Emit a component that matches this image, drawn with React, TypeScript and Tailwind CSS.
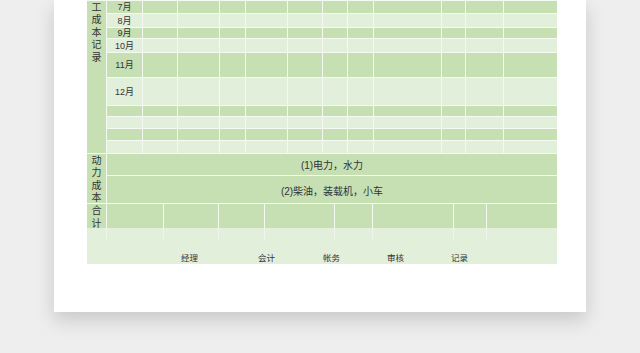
const DARK = "bg-[#c6e0b4]";
const LIGHT = "bg-[#e2efda]";

// month rows of the labour cost block, top to bottom
const monthRows = [
  { label: "7月", dark: true },
  { label: "8月", dark: false },
  { label: "9月", dark: true },
  { label: "10月", dark: false },
  { label: "11月", dark: true },
  { label: "12月", dark: false },
  { label: "", dark: true },
  { label: "", dark: false },
  { label: "", dark: true },
  { label: "", dark: false },
];

const blankCols = 11;
const totalCols = 8;
const signers = [
  { name: "经理", cls: "ml-[94px]" },
  { name: "会计", cls: "ml-[60px]" },
  { name: "帐务", cls: "ml-[48px]" },
  { name: "审核", cls: "ml-[47px]" },
  { name: "记录", cls: "ml-[47px]" },
];

function VerticalLabel({ chars, className = "" }: { chars: string; className?: string }) {
  return (
    <div className={`flex flex-col items-center text-[10px] leading-[12.5px] text-[#333] ${className}`}>
      {chars.split("").map((c, i) => (
        <span key={i}>{c}</span>
      ))}
    </div>
  );
}

export default function App() {
  return (
    <div className="h-[353px] w-[640px] overflow-hidden bg-[#eeeeee] font-['Liberation_Sans','Noto_Sans_CJK_SC',sans-serif]">
      <div className="ml-[54px] w-[532px] bg-white pb-[48px] pl-[33px] shadow-[0_8px_18px_rgba(0,0,0,0.16)]">
        <div className="w-[470px]">
          {/* labour cost by month */}
          <div className="grid grid-cols-[19px_35px_34px_41px_25px_41px_34px_24px_25px_67px_23px_37px_53px] grid-rows-[12px_13px_10px_13px_24px_27px_10px_11px_11px_12px] gap-px bg-[#f4f9f1] py-px">
            <div className={`row-span-10 col-start-1 row-start-1 ${DARK} flex justify-center`}>
              <VerticalLabel chars="人工成本记录" className="-mt-[12px]" />
            </div>
            {monthRows.map((row, r) => (
              <div key={r} className="contents">
                <div className={`${row.dark ? DARK : LIGHT} flex items-center justify-center pt-[2px] text-[9px] text-[#333]`}>
                  {row.label}
                </div>
                {Array.from({ length: blankCols }).map((_, c) => (
                  <div key={c} className={row.dark ? DARK : LIGHT} />
                ))}
              </div>
            ))}
          </div>

          {/* power cost */}
          <div className="flex h-[50px] gap-px bg-[#f4f9f1] pb-px">
            <div className={`w-[19px] ${DARK} flex items-center justify-center`}>
              <VerticalLabel chars="动力成本" className="translate-y-px" />
            </div>
            <div className="flex flex-1 flex-col gap-px">
              <div className={`h-[21px] ${DARK} flex items-center justify-center pt-[2px] text-[10px] text-[#333]`}>(1)电力，水力</div>
              <div className={`h-[27px] ${DARK} flex items-center justify-center pt-[3px] text-[10px] text-[#333]`}>(2)柴油，装载机，小车</div>
            </div>
          </div>

          {/* total */}
          <div className="grid h-[24px] grid-cols-[19px_56px_54px_45px_69px_37px_80px_32px_70px] gap-x-px bg-[#f4f9f1] pb-px">
            <div className={`${DARK} flex items-center justify-center`}>
              <VerticalLabel chars="合计" className="translate-y-px" />
            </div>
            {Array.from({ length: totalCols }).map((_, c) => (
              <div key={c} className={DARK} />
            ))}
          </div>

          {/* sign-off */}
          <div className="grid h-[12px] grid-cols-[19px_56px_54px_45px_69px_37px_80px_32px_70px] gap-x-px bg-[#eef6ea]">
            {Array.from({ length: totalCols + 1 }).map((_, c) => (
              <div key={c} className={LIGHT} />
            ))}
          </div>
          <div className={`flex h-[24px] items-end ${LIGHT} pb-px text-[8.5px] leading-[9px] text-[#333]`}>
            {signers.map((s) => (
              <span key={s.name} className={s.cls}>
                {s.name}
              </span>
            ))}
          </div>
        </div>
      </div>
    </div>
  );
}
